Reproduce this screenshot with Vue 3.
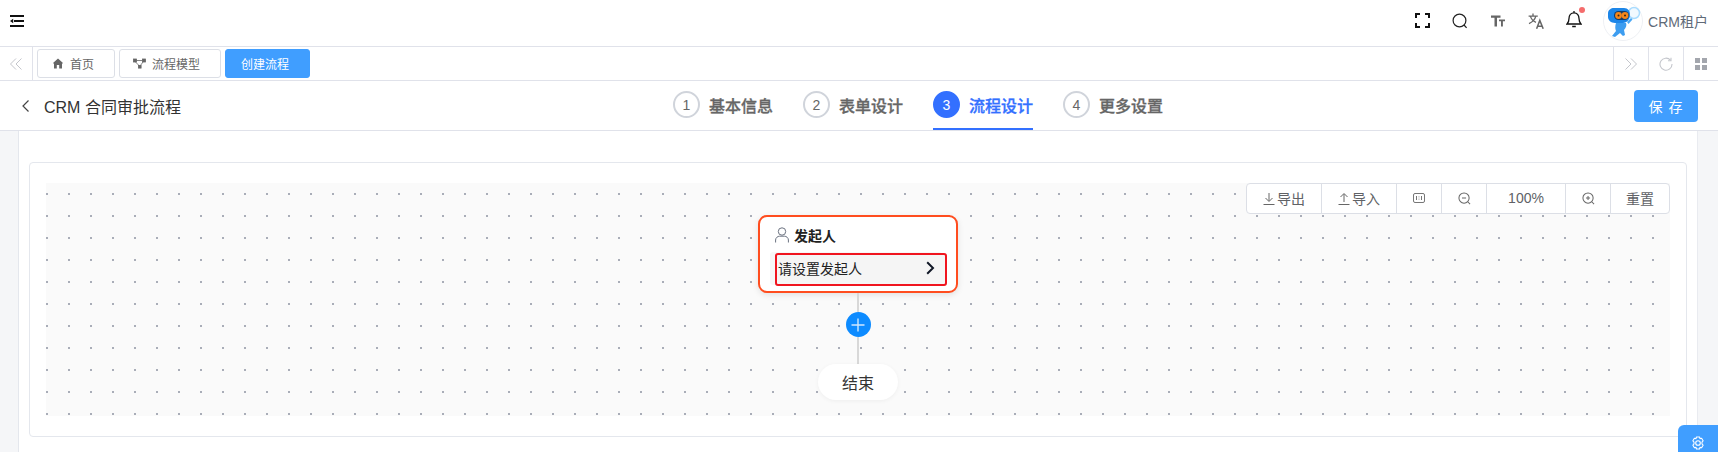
<template>
  <div class="page">
    <header class="topbar">
      <button type="button" class="menu-btn" aria-label="menu">
        <svg width="14" height="12" viewBox="0 0 14 12" fill="none">
          <path d="M0 1h14M4 6h10M0 11h14" stroke="#111" stroke-width="2" />
          <path d="M3.2 3.800 0 6l3.200 2.200z" fill="#111" />
        </svg>
      </button>
      <div class="topbar-right">
        <span class="top-icon">
          <svg width="15" height="15" viewBox="0 0 15 15" fill="none" stroke="#111" stroke-width="2">
            <path d="M1 5V1h4M10 1h4v4M14 10v4h-4M5 14H1v-4" />
          </svg>
        </span>
        <span class="top-icon">
          <svg width="16" height="16" viewBox="0 0 16 16" fill="none" stroke="#222" stroke-width="1.2">
            <circle cx="7.500" cy="7.500" r="6.400" />
            <path d="M12 12l2.600 2.800" />
          </svg>
        </span>
        <span class="top-icon">
          <svg width="14" height="12" viewBox="0 0 14 12" fill="#666">
            <path d="M0 .5h9.500v2.200H6V11.500H3.500V2.700H0zM8 4.500h6v1.700h-2.100v5.300H10V6.200H8z" />
          </svg>
        </span>
        <span class="top-icon">
          <svg width="16" height="16" viewBox="0 0 16 16" fill="none" stroke="#666" stroke-width="1.300">
            <path d="M.6 3.200h9.200M5 .6v2.600M7.800 3.200C7 6.600 4.600 9 1 10.600M2.400 3.200c.8 3 3 5.200 5.600 6.200" />
            <path d="M8.600 15.800l3.200-8.400 3.400 8.400M9.600 13.200h4.600" stroke-width="1.500" />
          </svg>
        </span>
        <span class="top-icon bell">
          <svg width="16" height="18" viewBox="0 0 16 18" fill="none" stroke="#111" stroke-width="1.300">
            <path d="M8 1v1.600M1 14h14c-1.600-1.400-2-2.600-2-5.400C13 5.200 11 2.800 8 2.800S3 5.200 3 8.600C3 11.400 2.600 12.600 1 14zM6.200 16.500h3.600" />
          </svg>
          <i class="dot" />
        </span>
        <span class="avatar">
          <svg width="40" height="40" viewBox="0 0 40 40">
            <circle cx="20" cy="20" r="19.500" fill="#fff" stroke="#eef0f4" />
            <circle cx="31" cy="12" r="5.500" fill="#f1f9ff" stroke="#a9dcff" stroke-width="1.500" />
            <path d="M24 21l4-4 1.500 1.500-4 4.500z" fill="#4aa8f5" />
            <path d="M13 22c-1 3-1 6 0 8l-4 5 3 1 5-4 3 3 2-1-1-5c2-2 3-5 2-7z" fill="#3d9df0" />
            <path d="M5 12c0-3 3-5 6-5h10c4 0 6 3 6 7s-3 8-7 8h-8c-4 0-7-3-7-6z" fill="#1d86e8" />
            <rect x="11" y="10" width="15" height="9" rx="4.500" fill="#143a66" />
            <circle cx="15.500" cy="14.500" r="3.400" fill="#f5861a" />
            <circle cx="22" cy="14.500" r="3.400" fill="#f5861a" />
            <circle cx="15.500" cy="14.500" r="1" fill="#3a2412" />
            <circle cx="22" cy="14.500" r="1" fill="#3a2412" />
          </svg>
        </span>
        <span class="tenant">CRM租户</span>
      </div>
    </header>

    <nav class="tabbar">
      <button type="button" class="tab-arrow" aria-label="prev">
        <svg width="14" height="14" viewBox="0 0 14 14" fill="none" stroke="#c4c6cc" stroke-width="1">
          <path d="M7 1.500 1.500 7 7 12.500M12.500 1.500 7 7l5.500 5.500" />
        </svg>
      </button>
      <div class="tabs">
        <a class="tab home-tab">
          <svg width="12" height="11" viewBox="0 0 12 11" fill="#666">
            <path d="M6 .5 11 5l-.8.8-.2-.2V10.500H7.200V7H4.800v3.500H2V5.600l-.2.200L1 5z" />
          </svg>
          首页
        </a>
        <a class="tab model-tab">
          <svg width="13" height="11" viewBox="0 0 13 11" fill="#666" stroke="#666" stroke-width=".8">
            <rect x=".5" y="1" width="3" height="3" />
            <rect x="9.500" y="1" width="3" height="3" />
            <rect x="5.500" y="7.500" width="2.600" height="2.600" />
            <path d="M3.500 2.500h6M2.500 4l4 4M10 4 7 8" fill="none" />
          </svg>
          流程模型
        </a>
        <a class="tab active">创建流程</a>
      </div>
      <div class="tab-tools">
        <button type="button" class="tool-cell" aria-label="next">
          <svg width="14" height="14" viewBox="0 0 14 14" fill="none" stroke="#c4c6cc" stroke-width="1">
            <path d="M1.500 1.500 7 7l-5.500 5.500M7 1.500 12.500 7 7 12.500" />
          </svg>
        </button>
        <button type="button" class="tool-cell" aria-label="refresh">
          <svg width="14" height="14" viewBox="0 0 14 14" fill="none" stroke="#c4c6cc" stroke-width="1.100">
            <path d="M11.500 3.200A6 6 0 1 0 13 7" />
            <path d="M12 .8v3h-3" />
          </svg>
        </button>
        <button type="button" class="tool-cell" aria-label="grid">
          <svg width="12" height="12" viewBox="0 0 12 12" fill="#a3a6ad">
            <rect width="5" height="5" />
            <rect x="7" width="5" height="5" />
            <rect y="7" width="5" height="5" />
            <rect x="7" y="7" width="5" height="5" />
          </svg>
        </button>
      </div>
    </nav>

    <section class="page-head">
      <div class="title">
        <svg width="9" height="14" viewBox="0 0 9 14" fill="none" stroke="#444" stroke-width="1.200">
          <path d="M7.500 1.500 2 7l5.500 5.500" />
        </svg>
        <span>CRM 合同审批流程</span>
      </div>
      <div class="steps">
        <div v-for="(s, i) in steps" :key="s" class="step" :class="{ current: i === 2 }">
          <span class="step-num">{{ i + 1 }}</span>
          <span class="step-label">{{ s }}</span>
        </div>
      </div>
      <button type="button" class="save">保 存</button>
    </section>

    <main class="content">
      <div class="card">
        <div class="canvas">
          <div class="toolbar">
            <span class="tool w-export">
              <svg width="12" height="13" viewBox="0 0 12 13" fill="none" stroke="#666" stroke-width="1">
                <path d="M6 1v8M2.500 6 6 9.500 9.500 6M.5 12.500h11" />
              </svg>
              导出
            </span>
            <span class="tool w-import">
              <svg width="12" height="13" viewBox="0 0 12 13" fill="none" stroke="#666" stroke-width="1">
                <path d="M6 10V2M2.500 5 6 1.500 9.500 5M.5 12.500h11" />
              </svg>
              导入
            </span>
            <span class="tool w-icon">
              <svg width="12" height="10" viewBox="0 0 12 10" fill="none" stroke="#777" stroke-width="1">
                <rect x=".5" y=".5" width="11" height="9" rx="1.500" />
                <path d="M3.500 3v4M8.500 3v4M6 3.500v.8M6 5.700v.8" />
              </svg>
            </span>
            <span class="tool w-icon">
              <svg width="13" height="13" viewBox="0 0 14 14" fill="none" stroke="#666" stroke-width="1.100">
                <circle cx="6.500" cy="6.500" r="5.500" />
                <path d="M4.300 6.500h4.400M10.500 10.500 13 13" />
              </svg>
            </span>
            <span class="tool w-zoom">100%</span>
            <span class="tool w-icon">
              <svg width="13" height="13" viewBox="0 0 14 14" fill="none" stroke="#666" stroke-width="1.100">
                <circle cx="6.500" cy="6.500" r="5.500" />
                <path d="M4.300 6.500h4.400M6.500 4.300v4.400M10.500 10.500 13 13" />
              </svg>
            </span>
            <span class="tool w-reset">重置</span>
          </div>

          <div class="flow">
            <div class="node">
              <div class="node-head">
                <svg width="14" height="16" viewBox="0 0 14 16" fill="none" stroke="#6b7280" stroke-width="1">
                  <circle cx="7" cy="4.500" r="3.700" />
                  <path d="M.6 15.500v-2.500c0-2.200 2-3.800 4-3.800h4.800c2 0 4 1.600 4 3.800v2.500" />
                </svg>
                <span>发起人</span>
              </div>
              <div class="node-body">
                <span>请设置发起人</span>
                <svg width="9" height="14" viewBox="0 0 9 14" fill="none" stroke="#111827" stroke-width="2">
                  <path d="M1.200 1.200 7 7l-5.800 5.800" />
                </svg>
              </div>
            </div>
            <div class="link link-top" />
            <button type="button" class="add" aria-label="add">
              <svg width="14" height="14" viewBox="0 0 14 14" fill="none" stroke="#cfe8ff" stroke-width="1.400">
                <path d="M7 .5v13M.5 7h13" />
              </svg>
            </button>
            <div class="link link-bottom" />
            <div class="end">结束</div>
          </div>
        </div>
      </div>
    </main>

    <button type="button" class="settings" aria-label="settings">
      <svg width="14" height="14" viewBox="0 0 14 14" fill="none" stroke="#fff" stroke-width="1.100" stroke-linejoin="round">
        <path d="M5.500 1H8.500L9 2.600 10.600 2.200 12.100 4.800 11 6V8L12.100 9.200 10.600 11.800 9 11.400 8.500 13H5.500L5 11.400 3.400 11.800 1.900 9.200 3 8V6L1.900 4.800 3.400 2.200 5 2.600Z" />
        <circle cx="7" cy="7" r="2.300" />
      </svg>
    </button>
  </div>
</template>

<script setup>
const steps = ['基本信息', '表单设计', '流程设计', '更多设置']
</script>

<style>
html,
body {
  margin: 0;
  overflow: hidden;
}
</style>

<style scoped>
.page {
  position: relative;
  width: 1718px;
  height: 452px;
  overflow: hidden;
  background: #f5f6f8;
  font-family: "Liberation Sans", "Noto Sans CJK SC", sans-serif;
  color: #333;
}
button {
  border: 0;
  padding: 0;
  background: none;
  font: inherit;
}
.topbar {
  box-sizing: border-box;
  height: 47px;
  padding-bottom: 5px;
  display: flex;
  align-items: center;
  justify-content: space-between;
  background: #fff;
  border-bottom: 1px solid #e0e2ea;
}
.menu-btn {
  display: flex;
  margin-left: 10px;
}
.topbar-right {
  display: flex;
  align-items: center;
}
.top-icon {
  position: relative;
  width: 38px;
  display: flex;
  justify-content: center;
}
.bell {
  margin-bottom: 3px;
}
.dot {
  position: absolute;
  top: -3px;
  right: 8px;
  width: 6px;
  height: 6px;
  border-radius: 50%;
  background: #f56c6c;
}
.avatar {
  display: flex;
  margin-left: 10px;
}
.tenant {
  margin: 0 10px 0 5px;
  font-size: 14px;
  color: #606a78;
}
.tabbar {
  height: 33px;
  display: flex;
  background: #fff;
  border-bottom: 1px solid #e0e2ea;
}
.tab-arrow {
  width: 33px;
  display: flex;
  align-items: center;
  justify-content: center;
  border-right: 1px solid #e0e2ea;
}
.tabs {
  flex: 1;
  display: flex;
  align-items: center;
  gap: 4px;
  padding-left: 4px;
}
.tab {
  box-sizing: border-box;
  height: 29px;
  display: flex;
  align-items: center;
  gap: 6px;
  padding-left: 14px;
  border: 1px solid #dcdfe6;
  border-radius: 3px;
  font-size: 12px;
  color: #666;
}
.home-tab {
  width: 78px;
}
.model-tab {
  width: 102px;
  padding-left: 13px;
}
.tab.active {
  width: 85px;
  padding-left: 15px;
  background: #409eff;
  border-color: #409eff;
  color: #fff;
}
.tab-tools {
  display: flex;
}
.tool-cell {
  width: 35px;
  display: flex;
  align-items: center;
  justify-content: center;
  border-left: 1px solid #e0e2ea;
}
.page-head {
  position: relative;
  height: 49px;
  display: flex;
  align-items: center;
  justify-content: space-between;
  background: #fff;
  border-bottom: 1px solid #e0e2ea;
  padding: 0 20px 0 21px;
}
.title {
  display: flex;
  align-items: center;
  gap: 14px;
  font-size: 16px;
  color: #333;
}
.steps {
  height: 100%;
  display: flex;
  gap: 30px;
  margin-left: 21px;
}
.step {
  box-sizing: border-box;
  height: 100%;
  display: flex;
  align-items: center;
  gap: 9px;
  border-bottom: 2px solid transparent;
  color: #666;
  font-size: 16px;
  font-weight: 500;
  -webkit-text-stroke: 0.3px currentColor;
}
.step.current {
  border-bottom-color: #3370ff;
  color: #3370ff;
}
.step-num {
  box-sizing: border-box;
  width: 27px;
  height: 27px;
  display: flex;
  align-items: center;
  justify-content: center;
  border: 2px solid #d0d4db;
  border-radius: 50%;
  font-size: 14px;
  font-weight: 400;
  -webkit-text-stroke: 0;
}
.current .step-num {
  background: #3370ff;
  border-color: #3370ff;
  color: #fff;
}
.save {
  width: 64px;
  height: 32px;
  border-radius: 4px;
  background: #409eff;
  color: #fff;
  font-size: 14px;
  letter-spacing: 1px;
}
.content {
  box-sizing: border-box;
  height: 322px;
  margin: 0 20px 0 18px;
  padding: 31px 10px 0 10px;
  background: #fff;
  border-left: 1px solid #e4e7ed;
  border-right: 1px solid #e9ebf0;
}
.card {
  box-sizing: border-box;
  height: 275px;
  padding: 20px 16px;
  border: 1px solid #e4e7ed;
  border-radius: 4px;
}
.canvas {
  position: relative;
  height: 233px;
  background-color: #fafafa;
  background-image: conic-gradient(at 2px 2px, transparent 75%, #a9adb8 0);
  background-size: 22px 22px;
  background-position: 0 10px;
}
.toolbar {
  position: absolute;
  top: 0;
  right: 0;
  height: 31px;
  display: flex;
  box-sizing: border-box;
  background: #fff;
  border: 1px solid #dcdfe6;
  border-radius: 4px;
}
.tool {
  display: flex;
  align-items: center;
  justify-content: center;
  gap: 2px;
  padding-bottom: 1px;
  border-left: 1px solid #dcdfe6;
  font-size: 14px;
  color: #606266;
}
.tool:first-child {
  border-left: 0;
}
.w-export {
  width: 74px;
}
.w-import {
  width: 74px;
}
.w-icon {
  width: 44px;
}
.w-zoom {
  width: 78px;
}
.w-reset {
  width: 58px;
}
.flow {
  display: flex;
  flex-direction: column;
  align-items: center;
  padding-top: 32px;
}
.node {
  box-sizing: border-box;
  width: 200px;
  height: 78px;
  padding: 0 9px 0 15px;
  background: #fff;
  border: 2px solid #ff4d1f;
  border-radius: 9px;
  box-shadow: 0 2px 6px rgba(0, 0, 0, 0.1);
}
.node-head {
  box-sizing: border-box;
  height: 36px;
  padding-bottom: 1px;
  display: flex;
  align-items: center;
  gap: 5px;
  font-size: 14px;
  font-weight: 700;
  color: #222;
}
.node-body {
  box-sizing: border-box;
  height: 33px;
  display: flex;
  align-items: center;
  justify-content: space-between;
  padding: 0 10px 3px 1px;
  background: #f5f5f5;
  border: 2px solid #f0151f;
  border-radius: 3px;
  box-shadow: -5px -1px 0 #f7f7f7;
  font-size: 14px;
  color: #222;
}
.link {
  width: 2px;
  background: #d8d8d8;
}
.link-top {
  height: 19px;
}
.link-bottom {
  height: 27px;
}
.add {
  width: 25px;
  height: 25px;
  display: flex;
  align-items: center;
  justify-content: center;
  border-radius: 50%;
  background: #0d8bff;
}
.end {
  width: 80px;
  height: 36px;
  display: flex;
  align-items: center;
  justify-content: center;
  background: #fff;
  border-radius: 18px;
  box-shadow: 0 1px 4px rgba(0, 0, 0, 0.05);
  font-size: 16px;
  color: #333;
}
.settings {
  position: absolute;
  right: 0;
  bottom: 0;
  width: 40px;
  height: 27px;
  display: flex;
  justify-content: center;
  padding-top: 11px;
  background: #409eff;
  border-radius: 6px 0 0 0;
}
</style>
